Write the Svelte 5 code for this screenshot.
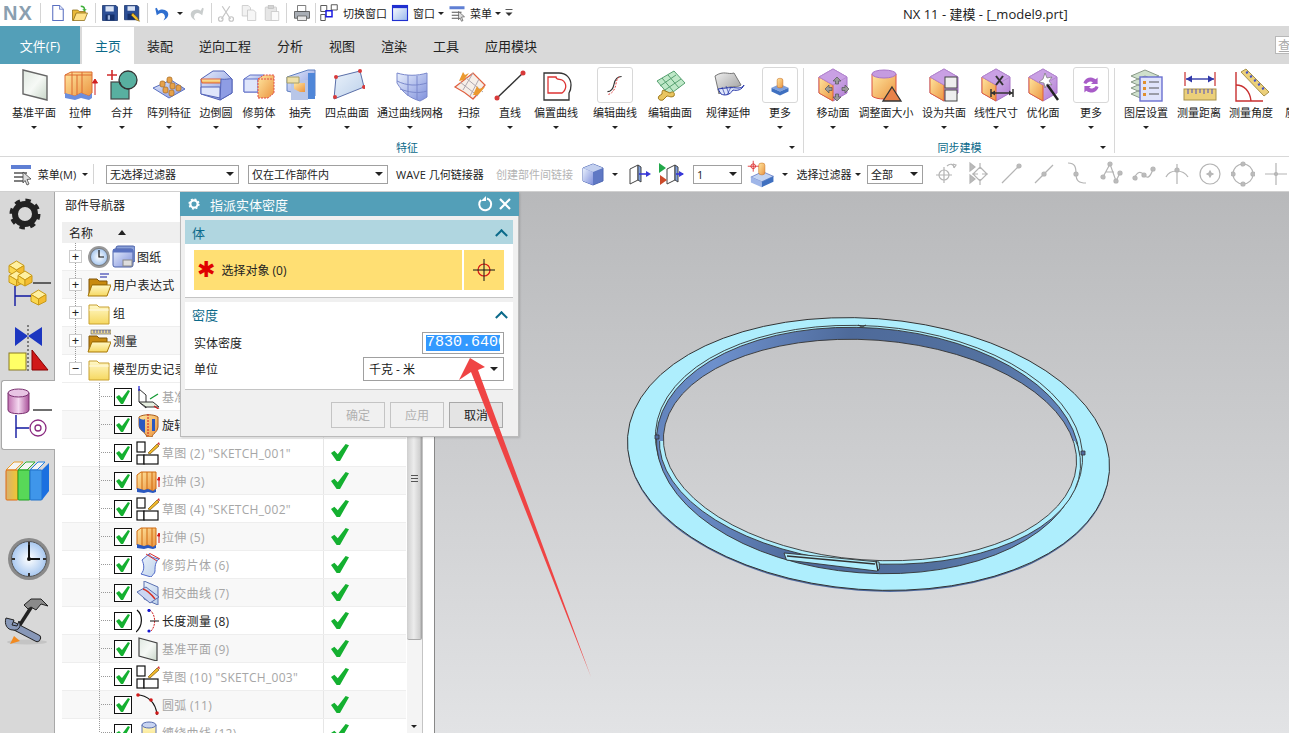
<script>
  // slot widths are px, read off the reference so the bars line up
  const qat = [
    { w: 34, logo: true }, { w: 12, sep: true },
    { w: 24, icon: "new" }, { w: 20, icon: "open" }, { w: 10, sep: true },
    { w: 20, icon: "save" }, { w: 24, icon: "saveas" }, { w: 6, sep: true },
    { w: 24, icon: "undo" }, { w: 12, caret: true }, { w: 22, icon: "redo" }, { w: 6, sep: true },
    { w: 24, icon: "cut" }, { w: 22, icon: "copy" }, { w: 23, icon: "paste" }, { w: 6, sep: true },
    { w: 26, icon: "print" }, { w: 1, sep: true },
    { w: 26, icon: "switchwin" }, { w: 46, label: "切换窗口" },
    { w: 24, icon: "win" }, { w: 24, label: "窗口" }, { w: 10, caret: true },
    { w: 22, icon: "menu" }, { w: 26, label: "菜单" }, { w: 8, caret: true },
    { w: 14, icon: "more" }
  ];

  const tabs = ["主页", "装配", "逆向工程", "分析", "视图", "渲染", "工具", "应用模块"];

  const groups = [
    {
      title: "特征", w: 804, pad: 10, arrow: true,
      items: [
        ["基准平面", 48, "datum"], ["拉伸", 44, "extrude"], ["合并", 40, "merge"], ["阵列特征", 54, "pattern"],
        ["边倒圆", 40, "blend"], ["修剪体", 46, "trim"], ["抽壳", 36, "shell"], ["四点曲面", 58, "fourpt"],
        ["通过曲线网格", 68, "mesh"], ["扫掠", 50, "sweep"], ["直线", 32, "line"], ["偏置曲线", 60, "offset"],
        ["编辑曲线", 58, "editcurve", true], ["编辑曲面", 52, "editsurf"], ["规律延伸", 64, "law"], ["更多", 40, "morefeat", true]
      ]
    },
    {
      title: "同步建模", w: 311, pad: 0, arrow: true,
      items: [
        ["移动面", 58, "moveface"], ["调整面大小", 48, "resize"], ["设为共面", 68, "coplanar"], ["线性尺寸", 36, "lindim"],
        ["优化面", 58, "optimize"], ["更多", 38, "moresync", true]
      ]
    },
    {
      title: "", w: 218, pad: 0,
      items: [
        ["图层设置", 62, "layers"], ["测量距离", 44, "measdist", false, true], ["测量角度", 60, "measang", false, true],
        ["质量属性", 52, "mass", false, true]
      ]
    }
  ];

  const selbar = [
    { w: 8 }, { w: 26, icon: "menu", size: 24 }, { w: 46, label: "菜单(M)" }, { w: 10, caret: true }, { w: 6, sep: true }, { w: 10 },
    { w: 133, select: "无选择过滤器" }, { w: 9 }, { w: 140, select: "仅在工作部件内" }, { w: 8 },
    { w: 100, label: "WAVE 几何链接器", left: true }, { w: 82, label: "创建部件间链接", left: true, off: true },
    { w: 30, icon: "cube", size: 24 }, { w: 14, caret: true }, { w: 34, icon: "wave1", size: 24 }, { w: 30, icon: "wave2", size: 26, vb: 26 }, { w: 7 },
    { w: 49, select: "1" }, { w: 38, icon: "filt", size: 28, vb: 36 }, { w: 10, caret: true }, { w: 6 },
    { w: 56, label: "选择过滤器" }, { w: 12, caret: true }, { w: 3 }, { w: 56, select: "全部" }, { w: 5 }
  ];

  const snaps = ["s1", "s2", "s3", "s4", "s5", "s6", "s7", "s8", "s9", "s10", "s11"];

  const sideTabs = [
    { icon: "sgear", h: 52 }, { icon: "sasm", h: 82 }, { icon: "scon", h: 44 },
    { icon: "spart", h: 70, mt: 10, active: true },
    { icon: "sbooks", h: 70 }, { icon: "sclock", h: 56, mt: 15 }, { icon: "stools", h: 56 }
  ];

  const topRows = [
    { text: "图纸", icons: ["clock", "sheets"], open: false },
    { text: "用户表达式", icons: ["folderexp"], open: false },
    { text: "组", icons: ["folder"], open: false },
    { text: "测量", icons: ["foldermeas"], open: false },
    { text: "模型历史记录", icons: ["folder"], open: true }
  ];

  const features = [
    ["基准坐标系 (0)", "tcsys", true], ["旋转 (1)", "trevolve", false], ['草图 (2) "SKETCH_001"', "tsketch", true],
    ["拉伸 (3)", "textrude", true], ['草图 (4) "SKETCH_002"', "tsketch", true], ["拉伸 (5)", "textrude", true],
    ["修剪片体 (6)", "ttrim", true], ["相交曲线 (7)", "tinter", true], ["长度测量 (8)", "tlength", false],
    ["基准平面 (9)", "tdatum", true], ['草图 (10) "SKETCH_003"', "tsketch", true], ["圆弧 (11)", "tarc", true],
    ["缠绕曲线 (12)", "twrap", true]
  ];

  const cube = `<path d="M18 2l14 8v16l-14 8L4 26V10z" fill="url(#gLilac)" stroke="#a874c8"/><path d="M4 10l14 8v16L4 26z" fill="url(#gOrange)" stroke="#e0603a"/><path d="M4 10l14-8 14 8-14 8z" fill="#c9a0e4" stroke="#b488d0"/>`;

  // little yellow block for the assembly tab
  const block = (x, y, w, h) =>
    `<g stroke="#c89a18"><path d="M${x} ${y + h * 0.3}L${x + w / 2} ${y}L${x + w} ${y + h * 0.3}L${x + w / 2} ${y + h * 0.6}Z" fill="#fff0a0"/>` +
    `<path d="M${x} ${y + h * 0.3}L${x + w / 2} ${y + h * 0.6}V${y + h}L${x} ${y + h * 0.75}Z" fill="#fbd850"/>` +
    `<path d="M${x + w} ${y + h * 0.3}L${x + w / 2} ${y + h * 0.6}V${y + h}L${x + w} ${y + h * 0.75}Z" fill="#f4bc30"/></g>`;

  const icons = {
    // quick access
    new: `<path d="M5 2h9l5 5v15H5z" fill="#fff" stroke="#5a6fc0" stroke-width="1.4"/><path d="M14 2v5h5" fill="#dfe6fa" stroke="#5a6fc0"/>`,
    open: `<path d="M2 8h7l2 2h8v3H7l-3 9H2z" fill="#e9b93a" stroke="#8a6a14"/><path d="M7 12h15l-4 10H3z" fill="#ffe28a" stroke="#8a6a14"/><path d="M13 2c4 0 6 2 6 5h2l-3 3-3-3h2c0-2-2-3-4-3z" fill="#3faf3a"/>`,
    save: `<path d="M2 2h18l2 2v18H2z" fill="#2c4f96" stroke="#15306a"/><rect x="6" y="3" width="11" height="7" fill="#d8e2f4"/><rect x="6" y="14" width="12" height="8" fill="#15306a"/><rect x="9" y="15" width="3" height="6" fill="#9fb4dc"/>`,
    saveas: `<path d="M2 2h17l2 2v17H2z" fill="#2c4f96" stroke="#15306a"/><rect x="6" y="3" width="10" height="6" fill="#d8e2f4"/><rect x="6" y="13" width="10" height="8" fill="#15306a"/><path d="M13 12l6 6 3 5-5-2-6-6z" fill="#f4c22a" stroke="#7a5a10" stroke-width=".8"/>`,
    undo: `<path d="M3 6l2 9 3-2c3-2 8-1 8 5l-2 4c6-3 8-8 5-12-3-3-8-4-12-1L5 5z" fill="#2f6fd0"/>`,
    redo: `<path d="M21 6l-2 9-3-2c-3-2-8-1-8 5l2 4C4 19 2 14 5 10c3-3 8-4 12-1l2-4z" fill="#c9cdcd"/>`,
    cut: `<path d="M6 20l11-17M18 20L7 3" stroke="#c4c4c4" stroke-width="1.6" fill="none"/><circle cx="5" cy="20" r="3" fill="none" stroke="#c4c4c4" stroke-width="1.6"/><circle cx="19" cy="20" r="3" fill="none" stroke="#c4c4c4" stroke-width="1.6"/>`,
    copy: `<path d="M3 2h8l3 3v11H3z" fill="#f2f2f2" stroke="#c4c4c4"/><path d="M10 8h8l3 3v11H10z" fill="#f6f6f6" stroke="#c4c4c4"/>`,
    paste: `<rect x="3" y="4" width="15" height="18" rx="1" fill="#e6e6e6" stroke="#c4c4c4"/><rect x="7" y="2" width="7" height="4" fill="#d4d4d4" stroke="#c0c0c0"/><path d="M11 10h10v12H11z" fill="#fafafa" stroke="#c4c4c4"/>`,
    print: `<path d="M6 2h11v8H6z" fill="#fff" stroke="#555"/><path d="M2 10h20v9H2z" fill="#a9aeb5" stroke="#444"/><path d="M6 16h12v6H6z" fill="#e8e8e8" stroke="#555"/>`,
    switchwin: `<path d="M1 2h8v8H1zM1 14h6v8H1zM15 1h8v7h-8z" fill="#fff" stroke="#555" stroke-width="1.3"/><rect x="8" y="9" width="8" height="8" fill="#fff" stroke="#1a1ae0" stroke-width="2"/>`,
    win: `<rect x="2" y="2" width="20" height="20" fill="url(#gWin)" stroke="#1f2fd0" stroke-width="1.5"/><rect x="2" y="2" width="20" height="3.5" fill="#1f2fd0"/>`,
    menu: `<rect x="2" y="3" width="20" height="4" fill="#5f7fd4"/><path d="M5 11h13M5 15h10M5 19h10" stroke="#555" stroke-width="1.6"/><path d="M14 10l8 7-4 .5 2 4.500-2 1-2-4.500-2 2.500z" fill="#ddd" stroke="#444" stroke-width=".8"/>`,
    more: `<path d="M6 6h12" stroke="#333" stroke-width="1.4"/><path d="M6 11h12l-6 6z" fill="#333"/>`,
    // feature group
    datum: `<path d="M7 3l24 6v24L7 27z" fill="url(#gSheet)" stroke="#666" stroke-width="1.4"/>`,
    extrude: `<path d="M3 8l6-3h21v21l-3 3-8-3-6 3-10-2z" fill="url(#gOrange)" stroke="#dc6a30"/><path d="M3 8h27M10 5v24M20 5v21M15 8v20" stroke="#dc6a30" fill="none"/><path d="M3 26l10 3 6-3 8 3 3-3v5l-3 2-8-2-6 2-10-2z" fill="#6b8ede"/><path d="M33 28V13m-2.500 3l2.500-4 2.500 4z" stroke="#d02020" fill="#d02020"/>`,
    merge: `<rect x="7" y="15" width="18" height="17" fill="#58b0a0" stroke="#444" stroke-width="1.2"/><circle cx="24" cy="13" r="9" fill="#58b0a0" stroke="#333" stroke-width="1.3"/><path d="M25 22a9 9 0 0 1-9-7" fill="none" stroke="#333"/><path d="M8 3v10M3 8h10" stroke="#d02a2a" stroke-width="1.6"/>`,
    pattern: `<path d="M2 21l18-8 14 9-16 9z" fill="url(#gBlue)" stroke="#5a70c0"/><g fill="#e6a24a" stroke="#a8681c" stroke-width=".7"><rect x="9" y="14" width="5" height="6" rx="2"/><rect x="16" y="10" width="5" height="6" rx="2"/><rect x="12" y="20" width="5" height="6" rx="2"/><rect x="19" y="16" width="5" height="6" rx="2"/><rect x="25" y="18" width="5" height="6" rx="2"/><rect x="18" y="23" width="5" height="6" rx="2"/></g>`,
    blend: `<path d="M3 12l12-8h11l8 8v14l-12 7-19-6z" fill="url(#gBlue)" stroke="#5464b8"/><path d="M3 12h20l3 4H4z" fill="url(#gYellow)" stroke="#e0603a"/><path d="M3 20h19v11L3 27z" fill="#dfe6fb" stroke="#5464b8"/><path d="M23 12c5 1 10-1 11 0v14l-12 7z" fill="#8e9de4" stroke="#5464b8"/>`,
    trim: `<path d="M3 12l6-4h14v17H3z" fill="url(#gBlue)" stroke="#6070c8"/><path d="M3 12h14v13H3z" fill="#dfe6fb" stroke="#6070c8"/><path d="M17 12l6-4h10v18l-6 5H17z" fill="url(#gOrange)" stroke="#e04848" stroke-dasharray="2 1"/><path d="M17 12h16" stroke="#e04848" stroke-dasharray="2 1"/>`,
    shell: `<path d="M5 10l21-7h7v26H26L5 24z" fill="url(#gBlue)" stroke="#5f7fc0"/><path d="M9 13h17v20H9z" fill="#b8c6e8"/><path d="M12 16h11v9H18l-6-3z" fill="url(#gOrange)"/><path d="M26 6h7v26h-7z" fill="#4f86d8"/><path d="M5 10h12v6H5z" fill="#eee0a8" stroke="#a8a068"/>`,
    fourpt: `<path d="M7 10l24-6 4 16-30 12z" fill="url(#gSheetB)" stroke="#5a6fa8"/><g fill="#d83a3a"><circle cx="7" cy="10" r="2"/><circle cx="31" cy="4" r="2"/><circle cx="35" cy="20" r="2"/><circle cx="6" cy="30" r="2"/></g>`,
    mesh: `<path d="M5 6c10 3 20 3 30 0v24c-3 2-5 3-7 4C18 31 11 26 5 16z" fill="url(#gBlue)" stroke="#7a88cc"/><path d="M16 8v21M25 9v24M5 14c10 5 20 5 30 2M8 22c8 3 18 5 27 2" fill="none" stroke="#7a88cc"/>`,
    sweep: `<path d="M4 20L22 6l12 12c-4 5-8 10-12 14C16 27 10 23 4 20z" fill="#f6efe9" stroke="#e06040" stroke-width="1.3"/><path d="M9 15l18 14M15 11l17 14M22 6L12 23M28 12L19 29" stroke="#b0a8b0" fill="none"/><path d="M8 14l4-9 2 3 4-2-5 7z" fill="#eb9a30"/><path d="M22 28l4-9 2 3 6-2-7 8z" fill="#eb9a30"/>`,
    line: `<path d="M5 31L31 6" stroke="#333" stroke-width="1.4"/><circle cx="5" cy="31" r="2.500" fill="#d83a3a"/><circle cx="31" cy="6" r="2.500" fill="#d83a3a"/>`,
    offset: `<path d="M6 6h15c7 0 12 5 12 12 0 5-2 8-2 8v7H6V6z" fill="#fff" stroke="#333" stroke-width="1.3"/><path d="M10 10h8c0 3 3 2 6 3 5 3 5 9 0 13H10z" fill="#fff" stroke="#d33" stroke-width="1.3"/>`,
    editcurve: `<path d="M10 25c4 0 6-3 7-8s3-8 8-8" fill="none" stroke="#333" stroke-width="1.2"/><path d="M11 28c4-1 7-5 8-11s2-7 5-8" fill="none" stroke="#d33" stroke-dasharray="2 1.500"/>`,
    editsurf: `<path d="M5 14L22 4l11 12-16 12z" fill="#bfe8c8" stroke="#56a070"/><path d="M10 11l11 13M16 8l11 13M8 19l16-11M13 23l16-11" stroke="#56a070" fill="none"/><path d="M11 23l7 3c4-3 5 1 4 3-3 2-5 0-7 0l-4 4c-3 1-6-1-4-4l3-2c0-2 0-3 1-4z" fill="#e9c560" stroke="#a07a1c"/>`,
    law: `<path d="M5 9c9-6 13-1 19-3l7 12c-5 4-14-2-22 9z" fill="url(#gGray)" stroke="#777"/><path d="M8 22c7-1 14-2 20-1 3 0 5-1 6-3-2 5-7 6-11 5-3 5-8 6-12 4z" fill="#dfe6fb" stroke="#2838a8"/><path d="M12 20l3 8M16 19l3 8M21 20l-4 8" stroke="#2838a8" fill="none" stroke-width=".7"/>`,
    morefeat: `<path d="M9 21l9-4 9 4-9 4z" fill="#7fa0dc"/><path d="M9 21l9 4v4l-9-4zM18 25l9-4v4l-9 4z" fill="#3f70c0"/><rect x="15" y="11" width="6" height="10" rx="2" fill="url(#gOrange)" stroke="#c87020" stroke-width=".6"/>`,
    filt: `<path d="M5 22l15-7 14 6-15 7z" fill="#c3d4f2" stroke="#5f78c4"/><path d="M5 22l14 6v7L5 29z" fill="#9fb6e8"/><path d="M19 28l15-7v7l-15 7z" fill="#3f70c0"/><rect x="15" y="4" width="8" height="15" rx="3" fill="url(#gOrange)" stroke="#c87020" stroke-width=".7"/><circle cx="8" cy="8" r="3" fill="none" stroke="#d81818"/><path d="M8 1v14M1 8h14" stroke="#d81818"/>`,
    // synchronous group
    moveface: `${cube}<g fill="#999" stroke="#555" stroke-width=".7"><path d="M22 10l4 4h-2.500v3H20.500v-3H18zM22 34l4-4h-2.500v-3H20.500v3H18z"/><path d="M10 22l4-4v2.500h3v3h-3V26zM34 22l-4-4v2.500h-3v3h3V26z"/></g>`,
    resize: `<path d="M4 7v22c4 4 20 4 24 0V7z" fill="url(#gOrange)" stroke="#dc5040"/><ellipse cx="16" cy="7" rx="12" ry="4" fill="#c59be0" stroke="#a874c8"/><path d="M24 20l9 14H15z" fill="#e8824a" stroke="#333" stroke-width="1.3"/>`,
    coplanar: `${cube}<rect x="19" y="10" width="12" height="11" fill="#eee" stroke="#444"/><rect x="19" y="23" width="12" height="11" fill="#eee" stroke="#444"/>`,
    lindim: `${cube}<path d="M18 9l7 9m0-9l-7 9" stroke="#333" stroke-width="2"/><path d="M13 26h22M13 22v8M35 22v8" stroke="#333" stroke-width="1.5"/><path d="M13 26l4-2.500v5zM35 26l-4-2.500v5z" fill="#333"/>`,
    optimize: `${cube}<path d="M21 16l12 17" stroke="#222" stroke-width="2.400"/><path d="M20 6l2 5 5-1-3 4 3 4-5-1-2 4-1-5-5-1 4-3z" fill="#fff" stroke="#777" stroke-width=".7"/>`,
    moresync: `<path d="M10 16a8 8 0 0 1 13-4l2-2v7h-7l2-2a5 5 0 0 0-7 2zM26 20a8 8 0 0 1-13 4l-2 2v-7h7l-2 2a5 5 0 0 0 7-2z" fill="#a85cc8"/>`,
    layers: `<g fill="#cfe0cc" stroke="#8a9a8a"><path d="M3 9l14-6 14 6-14 6zM3 15l14-6 14 6-14 6zM3 21l14-6 14 6-14 6zM3 27l14-6 14 6-14 6z"/></g><rect x="12" y="10" width="22" height="24" fill="#e0e4fb" stroke="#6a70d0" stroke-width="1.400"/><g fill="#e09030"><rect x="15" y="14" width="3" height="3"/><rect x="15" y="20" width="3" height="3"/><rect x="15" y="26" width="3" height="3"/></g><path d="M21 15h10M21 21h10M21 27h10" stroke="#555"/>`,
    measdist: `<path d="M4 5v14M34 5v14" stroke="#c83030" stroke-width="1.200"/><path d="M5 12h28" stroke="#3038a8" stroke-width="1.400"/><path d="M5 12l6-3.500v7zM33 12l-6-3.500v7z" fill="#3038a8"/><rect x="3" y="22" width="32" height="11" fill="#ecd07a" stroke="#a8924a"/><path d="M7 22v5M11 22v4M15 22v5M19 22v4M23 22v5M27 22v4M31 22v5" stroke="#5050c0"/>`,
    measang: `<path d="M3 5v29h27" fill="none" stroke="#c83030" stroke-width="1.400"/><path d="M3 18c8 0 14 6 15 16" fill="none" stroke="#c83030" stroke-width="1.400"/><path d="M9 3l5-3 23 23-5 4z" fill="#ecd07a" stroke="#a8924a" transform="translate(-1 2)"/><path d="M13 6l2-1M17 10l2-1M21 14l2-1M25 18l2-1M29 22l2-1" stroke="#4050c8" stroke-width="2"/>`,
    mass: `<path d="M4 30L15 6l16 18-12 10z" fill="#a8c498" stroke="#6e8a60"/><path d="M9 20l16 0M6 26l18 0" stroke="#6e8a60"/>`,
    // selection bar
    cube: `<path d="M12 2l10 4v13l-10 4-10-4V6z" fill="#5f78c4" stroke="#4f68b4"/><path d="M2 6l10 4v13L2 19z" fill="url(#gBlue)"/><path d="M2 6l10-4 10 4-10 4z" fill="#c3d0ef"/>`,
    wave1: `<path d="M3 7l8-4v15l-8 4z" fill="#fff" stroke="#444"/><path d="M11 3l3 2v15l-3-2z" fill="#7fa0dc" stroke="#444"/><path d="M12 12h10" stroke="#3838d8" stroke-width="1.600"/><path d="M24 12l-5-3v6z" fill="#3838d8"/>`,
    wave2: `<path d="M9 8l8-4v15l-8 4z" fill="#fff" stroke="#444"/><path d="M17 4l3 2v15l-3-2z" fill="#7fa0dc" stroke="#444"/><path d="M18 13h7" stroke="#3838d8" stroke-width="1.600"/><path d="M26 13l-5-3v6z" fill="#3838d8"/><path d="M1 2l7 5-7 5z" fill="#22a84a"/><path d="M2 14l7 5-7 5z" fill="#cc4a2a"/>`,
    // snap points, greyed out
    s1: `<circle cx="11" cy="14" r="5"/><path d="M11 6v16M3 14h16M14 5c3-3 7-2 7 2M21 7l2-3-3-1"/>`,
    s2: `<path d="M4 2v8l5-4zM4 14v8l5-4z" fill="#bbb"/><path d="M14 6l7 7-7 7-7-7zM14 2v6M14 18v6M6 13h6M16 13h6"/>`,
    s3: `<path d="M3 22L19 6"/><circle cx="20" cy="5" r="2" fill="#bbb"/>`,
    s4: `<path d="M3 22L21 4"/><circle cx="12" cy="13" r="2" fill="#bbb"/>`,
    s5: `<path d="M3 2c7 0 8 4 8 11s3 9 10 9"/><circle cx="11" cy="13" r="2" fill="#bbb"/>`,
    s6: `<path d="M4 16L11 3l6 17 4-8M7 11h8"/><g fill="#bbb"><circle cx="4" cy="16" r="2"/><circle cx="11" cy="3" r="2"/><circle cx="17" cy="20" r="2"/><circle cx="21" cy="12" r="2"/></g>`,
    s7: `<path d="M2 18c3-8 7-8 10-4s6 3 9-6"/><g fill="#bbb"><circle cx="3" cy="17" r="2"/><circle cx="12" cy="14" r="2"/><circle cx="21" cy="8" r="2"/></g>`,
    s8: `<path d="M1 16c4-8 17-8 22 0M12 3v20"/><circle cx="12" cy="9" r="2" fill="#bbb"/>`,
    s9: `<circle cx="12" cy="13" r="10"/><path d="M12 10l1 2 2 1-2 1-1 2-1-2-2-1 2-1z" fill="#bbb"/>`,
    s10: `<circle cx="12" cy="13" r="10"/><g fill="#bbb"><circle cx="12" cy="3" r="2"/><circle cx="12" cy="23" r="2"/><circle cx="2" cy="13" r="2"/><circle cx="22" cy="13" r="2"/></g>`,
    s11: `<path d="M12 2v22M1 13h22"/><circle cx="12" cy="13" r="1.500" fill="#bbb"/>`,
    // side tabs
    sgear: `<circle cx="22" cy="22" r="10" fill="none" stroke="#222" stroke-width="6"/><circle cx="22" cy="22" r="13.500" fill="none" stroke="#222" stroke-width="4" stroke-dasharray="5.300 5.300"/>`,
    sasm: `${block(6, 2, 15, 15)}${block(6, 12, 15, 15)}${block(15, 12, 14, 15)}${block(28, 31, 15, 15)}<path d="M30 24h19" stroke="#111" stroke-width="1.200"/><path d="M12 27v20M12 37h16" stroke="#1018a0" stroke-width="1.400"/>`,
    scon: `<path d="M12 5l13 9-13 10zM39 5L25 14l14 10z" fill="#1c36c0"/><path d="M25 3v47" stroke="#222" stroke-dasharray="2 2"/><rect x="6" y="31" width="17" height="17" fill="#ffff66" stroke="#8a7a20"/><path d="M29 28l16 20H29z" fill="#d01818" stroke="#800"/>`,
    spart: `<path d="M3 11v17c0 5 21 5 21 0V11z" fill="url(#gPink)" stroke="#7a3070"/><ellipse cx="13.500" cy="11" rx="10.500" ry="4" fill="#e8c4e4" stroke="#7a3070"/><path d="M28 28h19" stroke="#111" stroke-width="1.200"/><path d="M11 33v23M11 46h13" stroke="#1018a0" stroke-width="1.400"/><circle cx="33" cy="46" r="8" fill="none" stroke="#8a2a80" stroke-width="1.300"/><circle cx="33" cy="46" r="3" fill="none" stroke="#8a2a80" stroke-width="1.300"/>`,
    sbooks: `<path d="M3 11l8-8h9l-8 8z" fill="#f4f4f4" stroke="#e8a030"/><rect x="3" y="11" width="12" height="30" rx="1" fill="url(#gBookO)" stroke="#e06a10"/><path d="M15 11l8-8h9l-8 8z" fill="#f4f4f4" stroke="#30b030"/><rect x="15" y="11" width="12" height="30" rx="1" fill="#58d858" stroke="#20a020"/><path d="M27 11l8-8h7l-8 8v0z" fill="#f4f4f4" stroke="#2080e0"/><rect x="27" y="11" width="12" height="30" rx="1" fill="#3f96ea" stroke="#2070c8"/><path d="M39 11l7-7v28l-7 9z" fill="#1c70e0"/>`,
    sclock: `<g transform="translate(4 0)"><circle cx="22" cy="22" r="21" fill="#8a8a8a"/><circle cx="22" cy="22" r="17.500" fill="url(#gClock)" stroke="#555"/><path d="M22 8v14h11" fill="none" stroke="#111" stroke-width="2"/><circle cx="22" cy="22" r="2" fill="#111"/><g fill="#333"><rect x="21" y="5" width="2" height="3"/><rect x="21" y="36" width="2" height="3"/><rect x="5" y="21" width="3" height="2"/><rect x="36" y="21" width="3" height="2"/></g></g>`,
    stools: `<ellipse cx="24" cy="49" rx="20" ry="2.500" fill="#c4c4c4"/><path d="M13 38L29 13" stroke="#222" stroke-width="3.500"/><path d="M21 12l7-6h10l7 7-7-2-5 6-5-3-3 2z" fill="#8a8a8a" stroke="#222"/><path d="M9 32l25 13" stroke="#222" stroke-width="8" stroke-linecap="round"/><path d="M9 32l25 13" stroke="#8898b8" stroke-width="6" stroke-linecap="round"/><path d="M3 25l8 2-2 5 5 1 2-5c3 6-1 10-6 9-6 0-9-6-7-12z" fill="#8898b8" stroke="#222"/><path d="M7 51l4-8 6 5z" fill="#f28a20"/>`,
    // navigator tree
    clock: `<circle cx="12" cy="12" r="11" fill="#999"/><circle cx="12" cy="12" r="8.500" fill="url(#gClock)" stroke="#555" stroke-width=".6"/><path d="M12 5v7h5" fill="none" stroke="#111" stroke-width="1.200"/>`,
    sheets: `<rect x="5" y="1" width="19" height="16" rx="2" fill="#8aa0d8" stroke="#4a60a8"/><rect x="2" y="4" width="20" height="18" rx="2" fill="url(#gBlue)" stroke="#4a60a8"/><rect x="2" y="4" width="20" height="3.500" fill="#5a72c0"/><rect x="12" y="15" width="9" height="6" fill="#ddd" stroke="#888"/>`,
    folder: `<path d="M2 4h8l2 2h10v17H2z" fill="url(#gFold)" stroke="#c8a030"/><path d="M2 9h20" stroke="#fff" stroke-opacity=".7"/>`,
    folderexp: `<path d="M2 6h8l2 2h8v4H5l-3 10z" fill="#c88a10" stroke="#805408"/><path d="M5 12h19l-4 11H1z" fill="url(#gFold)" stroke="#a87808"/><path d="M13 1h9M13 4h7" stroke="#6066c0" stroke-width="1.300"/>`,
    foldermeas: `<path d="M2 7h8l2 2h8v4H5l-3 9z" fill="#c88a10" stroke="#805408"/><path d="M5 13h19l-4 10H1z" fill="url(#gFold)" stroke="#a87808"/><rect x="4" y="1" width="20" height="4" fill="#eedc9a" stroke="#555" stroke-width=".6"/><path d="M7 1v3M10 1v3M13 1v3M16 1v3M19 1v3M22 1v3" stroke="#3040b0" stroke-width=".8"/>`,
    tcsys: `<path d="M3 4v13l7 6V10z" fill="#fff" stroke="#333"/><path d="M3 17h14l6 5H10z" fill="#e6efe0" stroke="#333"/><path d="M3 6V1" stroke="#1818d0" stroke-width="1.200"/><path d="M14 14l8-5" stroke="#109830" stroke-width="1.200"/><path d="M18 21l6 4" stroke="#d01818" stroke-width="1.200"/>`,
    trevolve: `<path d="M3 4c4-3 15-3 19 0v10c-1 6-5 6-6 10h-5C9 18 3 18 3 12z" fill="url(#gOrange)" stroke="#a85a1c"/><path d="M3 5c3 2 5 2 6 1v14C6 18 3 16 3 12zM16 6h3v12h-3z" fill="#2a58c0"/><path d="M12 1v22" stroke="#d01818" stroke-dasharray="2 1"/>`,
    tsketch: `<g fill="#fff" stroke="#111" stroke-width="1.200"><rect x="1" y="1" width="8" height="10"/><rect x="1" y="14" width="7" height="9"/><rect x="8" y="14" width="14" height="9"/></g><path d="M12 12l9-9 2 2-9 8z" fill="#f2b82a" stroke="#7a5a10" stroke-width=".7"/><path d="M21 3l2-2 1 3z" fill="#d03030"/>`,
    textrude: `<path d="M1 6l4-3h15v17l-3 2-5-2-4 2-7-2z" fill="url(#gOrange)" stroke="#d06a10"/><path d="M6 3v19M11 3v18M16 3v18" stroke="#d06a10"/><path d="M1 19l7 2 4-1 5 2 3-2v3l-3 1-5-1-4 1-7-1z" fill="#2a58c0"/><path d="M23 18V9m-1.500 2l1.500-3 1.500 3z" stroke="#d01818" fill="#d01818"/>`,
    ttrim: `<path d="M5 21c4-4 3-10 1-14L13 1c1 3 5 4 10 5-4 3-4 8-4 12 0 3-3 4-4 6z" fill="url(#gSheetB)" stroke="#4f68c8"/><path d="M10 1l11 7M13 0l11 6" stroke="#d83030"/>`,
    tinter: `<path d="M8 0l14 6v18L8 18z" fill="url(#gSheetB)" stroke="#5a70b0"/><path d="M1 11l9-5 13 10-9 6z" fill="#cbd6f2" stroke="#5a70b0"/><path d="M7 8c4 1 8 5 12 10" stroke="#d83020" stroke-width="1.500" fill="none"/>`,
    tlength: `<path d="M1 1c6 5 6 16-1 22" fill="none" stroke="#111" stroke-width="1.200"/><path d="M14 1c6 5 6 16 1 21" fill="none" stroke="#d02020" stroke-dasharray="2 1"/><path d="M14 12h9" stroke="#111"/><circle cx="13" cy="1.500" r="1.600" fill="#1818d0"/><circle cx="13" cy="22" r="1.600" fill="#1818d0"/>`,
    tdatum: `<path d="M3 1l18 5v18L3 19z" fill="url(#gSheet)" stroke="#444" stroke-width="1.200"/>`,
    tarc: `<path d="M1 2c10 0 19 7 20 20" fill="none" stroke="#111" stroke-width="1.200"/><g fill="#d01818"><circle cx="2" cy="2" r="1.800"/><circle cx="15" cy="7" r="1.800"/><circle cx="21" cy="20" r="1.800"/></g>`,
    twrap: `<path d="M6 4v18c4 2 10 2 14 0V4z" fill="url(#gFold)" stroke="#5a70b0"/><ellipse cx="13" cy="4" rx="7" ry="3" fill="#c8d4f2" stroke="#5a70b0"/>`
  };

  function toPath(cx, cy, a, b, deg) {
    // rotated ellipse as two arcs
    const r = (deg * Math.PI) / 180;
    const dx = a * Math.cos(r), dy = a * Math.sin(r);
    return `M${cx - dx} ${cy - dy}A${a} ${b} ${deg} 1 1 ${cx + dx} ${cy + dy}A${a} ${b} ${deg} 1 1 ${cx - dx} ${cy - dy}Z`;
  }

  const outer = toPath(868.5, 454, 241.5, 135.5, 4.2);
  const step = toPath(869, 447, 214, 121, 4.2);
  const wall = toPath(868, 450.5, 212, 122.5, 4.2);
  const rim = toPath(870, 453, 211, 110.5, 4.2);
  const hole = toPath(870, 450, 207, 110, 4.2);
</script>

<svg class="defs" aria-hidden="true">
  <defs>
    <linearGradient id="gOrange" x1="0" y1="0" x2="1" y2="1"><stop offset="0" stop-color="#ffe6a0" /><stop offset="1" stop-color="#eb9440" /></linearGradient>
    <linearGradient id="gYellow" x1="0" y1="0" x2="0" y2="1"><stop offset="0" stop-color="#fff2b0" /><stop offset="1" stop-color="#f0b050" /></linearGradient>
    <linearGradient id="gBlue" x1="0" y1="0" x2="1" y2="1"><stop offset="0" stop-color="#e8effc" /><stop offset="1" stop-color="#7f90dc" /></linearGradient>
    <linearGradient id="gLilac" x1="0" y1="0" x2="1" y2="1"><stop offset="0" stop-color="#e8d8f4" /><stop offset="1" stop-color="#b078d4" /></linearGradient>
    <linearGradient id="gSheet" x1="0" y1="0" x2="1" y2="1"><stop offset="0" stop-color="#dfe8e0" /><stop offset=".5" stop-color="#f6f9f6" /><stop offset="1" stop-color="#c8d6c8" /></linearGradient>
    <linearGradient id="gSheetB" x1="0" y1="0" x2="1" y2="1"><stop offset="0" stop-color="#eaf2fb" /><stop offset="1" stop-color="#bcd0ea" /></linearGradient>
    <linearGradient id="gGray" x1="0" y1="0" x2="1" y2="1"><stop offset="0" stop-color="#eee" /><stop offset="1" stop-color="#999" /></linearGradient>
    <linearGradient id="gWin" x1="0" y1="0" x2="1" y2="1"><stop offset="0" stop-color="#fff" /><stop offset="1" stop-color="#98b8ec" /></linearGradient>
    <linearGradient id="gPink" x1="0" y1="0" x2="1" y2="0"><stop offset="0" stop-color="#c070b0" /><stop offset=".5" stop-color="#f4d8f0" /><stop offset="1" stop-color="#a85098" /></linearGradient>
    <linearGradient id="gBookO" x1="0" y1="0" x2="1" y2="0"><stop offset="0" stop-color="#d8b070" /><stop offset="1" stop-color="#f0c830" /></linearGradient>
    <linearGradient id="gFold" x1="0" y1="0" x2="0" y2="1"><stop offset="0" stop-color="#fff8c8" /><stop offset="1" stop-color="#f6d860" /></linearGradient>
    <radialGradient id="gClock"><stop offset="0" stop-color="#fff" /><stop offset="1" stop-color="#a8c8f0" /></radialGradient>
    <linearGradient id="gWall" gradientUnits="userSpaceOnUse" x1="650" y1="400" x2="1090" y2="500">
      <stop offset="0" stop-color="#5f80b8" /><stop offset=".12" stop-color="#6d90cc" /><stop offset=".4" stop-color="#4e6a9a" /><stop offset=".7" stop-color="#53719f" /><stop offset="1" stop-color="#6a8dc8" />
    </linearGradient>
    <mask id="holeMask" maskUnits="userSpaceOnUse" x="600" y="300" width="540" height="300">
      <rect x="600" y="300" width="540" height="300" fill="#fff" />
      <path d={hole} fill="#000" />
    </mask>
    <clipPath id="lowerHalf"><rect x="600" y="441" width="540" height="160" /></clipPath>
  </defs>
</svg>

{#snippet bar(slots)}
  {#each slots as s}
    <div class="slot" class:left={s.left} style="width:{s.w}px">
      {#if s.logo}
        <span class="logo">NX</span>
      {:else if s.sep}
        <span class="sep"></span>
      {:else if s.caret}
        <span class="caret"></span>
      {:else if s.icon}
        <svg width={s.size || 18} height={s.size || 18} viewBox="0 0 {s.vb || 24} {s.vb || 24}">{@html icons[s.icon]}</svg>
      {:else if s.select}
        <div class="select"><span>{s.select}</span><span class="caret big"></span></div>
      {:else if s.label}
        <span class:off={s.off}>{s.label}</span>
      {/if}
    </div>
  {/each}
{/snippet}

<div class="app">
  <header class="qat">
    {@render bar(qat)}
    <div class="title">NX 11 - 建模 - [_model9.prt]</div>
  </header>

  <nav class="tabs">
    <div class="file">文件(F)</div>
    {#each tabs as t, i}
      <div class="tab" class:active={i === 0}>{t}</div>
    {/each}
    <div class="search">查</div>
  </nav>

  <section class="ribbon">
    {#each groups as g}
      <div class="group" style="width:{g.w}px;padding-left:{g.pad}px">
        <div class="items">
          {#each g.items as [label, w, icon, boxed, noarrow]}
            <div class="item" style="width:{w}px">
              <div class="ico" class:boxed>
                <svg width={boxed ? 34 : 36} height={boxed ? 34 : 36} viewBox="0 0 36 36">{@html icons[icon]}</svg>
              </div>
              <div class="lab">{label}</div>
              {#if !noarrow}<span class="caret"></span>{/if}
            </div>
          {/each}
        </div>
        <div class="gtitle">
          {g.title}
          {#if g.arrow}<span class="caret gcaret"></span>{/if}
        </div>
      </div>
    {/each}
  </section>

  <section class="selbar">
    {@render bar(selbar)}
    {#each snaps as s}
      <div class="snap">
        <svg width="24" height="26" viewBox="0 0 24 26" fill="none" stroke="#b4b4b4" stroke-width="1.200">{@html icons[s]}</svg>
      </div>
    {/each}
  </section>

  <main class="main">
    <aside class="side">
      {#each sideTabs as t}
        <div class="stab" class:active={t.active} style="height:{t.h}px;margin-top:{t.mt || 0}px">
          <svg width="48" height={t.active ? 66 : 52} viewBox={t.active ? "0 0 48 66" : "0 0 48 52"}>{@html icons[t.icon]}</svg>
        </div>
      {/each}
    </aside>

    <div class="nav">
      <div class="navhead">部件导航器</div>
      <div class="table">
        <div class="thead"><span>名称</span><span class="sort"></span></div>
        {#each topRows as r, i}
          <div class="row top" class:alt={i % 2 === 1} class:last={r.open}>
            <span class="exp">{r.open ? "−" : "+"}</span>
            {#each r.icons as ic}
              <svg width="24" height="24" viewBox="0 0 24 24">{@html icons[ic]}</svg>
            {/each}
            <span class="name">{r.text}</span>
          </div>
        {/each}
        {#each features as [text, ic, dim], i}
          <div class="row child" class:alt={i % 2 === 1}>
            <div class="namecol">
              <span class="check">
                <svg width="16" height="16" viewBox="0 0 16 16"><path d="M1 8l3-2 3 3 6-8 2 1-7 13h-2z" fill="#14b030" /></svg>
              </span>
              <svg width="24" height="24" viewBox="0 0 24 24">{@html icons[ic]}</svg>
              <span class="name" class:dim>{text}</span>
            </div>
            <div class="dep">
              <svg width="18" height="18" viewBox="0 0 16 16"><path d="M0 8l3-2 3 3 7-9 3 1-8 14H5z" fill="#14b030" /></svg>
            </div>
          </div>
        {/each}
      </div>
      <div class="scroll">
        <div class="thumb"><span class="grip"></span></div>
        <span class="caret sdown"></span>
      </div>
    </div>

    <div class="view">
      <svg class="ring" width="854" height="541" viewBox="435 192 854 541">
        <g mask="url(#holeMask)">
          <path d={outer} fill="#4f6a9e" transform="translate(0 1.500)" />
          <path d={outer} fill="#aeeefd" stroke="#333" />
          <path d={step} fill="none" stroke="#333" stroke-width=".9" />
          <path d={wall} fill="url(#gWall)" stroke="#333" stroke-width=".9" />
          <path d={rim} fill="#aeeefd" stroke="#333" stroke-width=".9" clip-path="url(#lowerHalf)" />
        </g>
        <path d={hole} fill="none" stroke="#333" stroke-width=".9" />
        <path d="M784 553l95 9 .5 7-3 2-90-11z" fill="#aeeefd" stroke="#333" stroke-width=".9" />
        <path d="M787 556l88 8M876 561l2 10" stroke="#333" fill="none" stroke-width="1.400" />
        <path d="M655 435h4v4h-4zM1081 451h4v4h-4z" fill="#4f6a9e" stroke="#333" stroke-width=".8" />
        <path d="M858 325l4 2 4-2" fill="none" stroke="#333" />
      </svg>
    </div>

    <div class="dialog">
      <div class="dtitle">
        <svg width="16" height="16" viewBox="0 0 44 44">{@html icons.sgear.replaceAll("#222", "#fff")}</svg>
        <span class="dname">指派实体密度</span>
        <svg class="dbtn" width="16" height="16" viewBox="0 0 16 16" fill="none" stroke="#fff" stroke-width="2"><path d="M4 4a6 6 0 1 0 6-1.500" /><path d="M9 0v5h-5" stroke-width="0" fill="#fff" /></svg>
        <svg width="16" height="16" viewBox="0 0 16 16" fill="none" stroke="#fff" stroke-width="2.200"><path d="M3 3l10 10M13 3L3 13" /></svg>
      </div>
      <div class="sect">
        <div class="shead blue"><span>体</span><span class="chev"></span></div>
        <div class="sbody pick">
          <div class="pickbox">
            <span class="star">✱</span>
            <span>选择对象 (0)</span>
          </div>
          <div class="pickbtn">
            <svg width="22" height="22" viewBox="0 0 22 22" fill="none"><circle cx="11" cy="11" r="6" stroke="#d81818" stroke-width="1.200" /><path d="M11 0v22M0 11h22" stroke="#111" /></svg>
          </div>
        </div>
      </div>
      <div class="sect">
        <div class="shead"><span>密度</span><span class="chev"></span></div>
        <div class="sbody form">
          <div class="frow">
            <span>实体密度</span>
            <div class="input"><span class="sel">7830.6400</span></div>
          </div>
          <div class="frow">
            <span>单位</span>
            <div class="select unit"><span>千克 - 米</span><span class="caret big"></span></div>
          </div>
        </div>
      </div>
      <div class="foot">
        <div class="btn off">确定</div>
        <div class="btn off">应用</div>
        <div class="btn">取消</div>
      </div>
    </div>

    <svg class="arrow" width="620" height="500" viewBox="0 192 620 500">
      <path d="M470 358l15 9-7 3 113 307-120-305-12 8z" fill="#ef4444" />
    </svg>
  </main>
</div>

<style>
  :global(body) {
    margin: 0;
    background: #fff;
  }

  .defs {
    position: absolute;
    width: 0;
    height: 0;
  }

  .app {
    width: 1289px;
    height: 733px;
    overflow: hidden;
    display: flex;
    flex-direction: column;
    font-family: "Open Sans", "Noto Sans CJK SC", sans-serif;
    font-size: 11px;
    color: #222;
    background: #fff;
  }

  .qat {
    height: 26px;
    display: flex;
    align-items: center;
    flex: none;
  }

  .slot {
    display: flex;
    align-items: center;
    justify-content: center;
    flex: none;
    white-space: nowrap;
  }

  .slot.left {
    justify-content: flex-start;
  }

  .logo {
    font: bold 20px "Liberation Sans", sans-serif;
    color: #8a9fb0;
    letter-spacing: 1px;
    margin-left: 2px;
  }

  .sep {
    width: 1px;
    height: 20px;
    background: #d4d4d4;
  }

  .caret {
    display: inline-block;
    width: 0;
    height: 0;
    border-left: 3px solid transparent;
    border-right: 3px solid transparent;
    border-top: 3px solid #222;
  }

  .caret.big {
    border-left-width: 4px;
    border-right-width: 4px;
    border-top-width: 4px;
  }

  .title {
    padding-left: 387px;
    font-size: 13px;
    white-space: nowrap;
  }

  .tabs {
    height: 38px;
    flex: none;
    background: #d9d9d9;
    display: flex;
    align-items: stretch;
    font-size: 13px;
    position: relative;
  }

  .file {
    width: 80px;
    margin-right: 2px;
    background: #539fb8;
    color: #fff;
    display: flex;
    align-items: center;
    justify-content: center;
  }

  .tab {
    padding: 0 13px;
    display: flex;
    align-items: center;
  }

  .tab.active {
    margin-top: 1px;
    background: #fff;
    color: #0b6a8a;
  }

  .search {
    position: absolute;
    left: 1275px;
    top: 10px;
    width: 14px;
    height: 18px;
    box-sizing: border-box;
    border: 1px solid #b8b8b8;
    border-right: 0;
    background: #fff;
    color: #aaa;
    line-height: 16px;
    padding-left: 2px;
    overflow: hidden;
  }

  .ribbon {
    height: 93px;
    flex: none;
    display: flex;
    border-bottom: 1px solid #d8d8d8;
    box-sizing: border-box;
    overflow: hidden;
  }

  .group {
    flex: none;
    box-sizing: border-box;
    position: relative;
    display: flex;
    flex-direction: column;
  }

  .group::after {
    content: "";
    position: absolute;
    right: 0;
    top: 4px;
    bottom: 3px;
    width: 1px;
    background: #d8d8d8;
  }

  .group:last-child::after {
    display: none;
  }

  .items {
    display: flex;
    flex: 1;
  }

  .item {
    flex: none;
    display: flex;
    flex-direction: column;
    align-items: center;
    white-space: nowrap;
  }

  .ico {
    width: 36px;
    height: 36px;
    margin-top: 3px;
    display: flex;
    align-items: center;
    justify-content: center;
    box-sizing: border-box;
    flex: none;
  }

  .ico.boxed {
    border: 1px solid #d8d8d8;
    border-radius: 3px;
  }

  .lab {
    margin-top: 2px;
    line-height: 16px;
  }

  .item .caret {
    margin-top: 5px;
  }

  .gtitle {
    text-align: center;
    color: #0b6a8a;
    line-height: 16px;
    height: 16px;
    position: relative;
  }

  .gcaret {
    position: absolute;
    right: 9px;
    top: 6px;
  }

  .selbar {
    height: 34px;
    flex: none;
    display: flex;
    align-items: center;
  }

  .select {
    flex: 1;
    height: 19px;
    box-sizing: border-box;
    border: 1px solid #a0a0a0;
    background: #fff;
    display: flex;
    align-items: center;
    justify-content: space-between;
    padding: 0 4px 0 3px;
  }

  .off {
    color: #b4b4b4;
  }

  .snap {
    width: 33.2px;
    flex: none;
    display: flex;
    justify-content: center;
  }

  .main {
    flex: 1;
    display: flex;
    position: relative;
    min-height: 0;
    border-top: 1px solid #d0d0d0;
  }

  .side {
    width: 55px;
    flex: none;
    box-sizing: border-box;
    background: #d8d8d8;
    border-right: 1px solid #a8a8a8;
    display: flex;
    flex-direction: column;
  }

  .stab {
    display: flex;
    align-items: center;
    justify-content: center;
    flex: none;
  }

  .stab.active {
    margin-left: 1px;
    margin-right: -1px;
    background: #fff;
    border: 1px solid #a8a8a8;
    border-right: 0;
    border-radius: 3px 0 0 3px;
    box-sizing: border-box;
  }

  .nav {
    width: 380px;
    flex: none;
    box-sizing: border-box;
    border-right: 1px solid #888;
    background: #fff;
    position: relative;
  }

  .navhead {
    height: 30px;
    line-height: 28px;
    padding-left: 10px;
    font-size: 12px;
  }

  .table {
    margin-left: 7px;
    width: 344px;
  }

  .thead {
    height: 21px;
    background: #efefef;
    display: flex;
    align-items: center;
    padding-left: 7px;
    gap: 25px;
    font-size: 12px;
  }

  .sort {
    width: 0;
    height: 0;
    border-left: 4px solid transparent;
    border-right: 4px solid transparent;
    border-bottom: 5px solid #222;
  }

  .row {
    height: 28px;
    box-sizing: border-box;
    border-bottom: 1px solid #eee;
    display: flex;
    align-items: center;
    position: relative;
    white-space: nowrap;
  }

  .row.alt {
    background: #f8f8f8;
  }

  .row.top {
    padding-left: 7px;
  }

  .row.top::before {
    content: "";
    position: absolute;
    left: 13px;
    top: 0;
    bottom: 0;
    border-left: 1px dotted #999;
  }

  .row.top.last::before {
    bottom: 14px;
  }

  .exp {
    width: 11px;
    height: 11px;
    border: 1px solid #ccc;
    background: #fff;
    line-height: 10px;
    text-align: center;
    font-size: 13px;
    margin-right: 5px;
    z-index: 1;
  }

  .name {
    margin-left: 2px;
    font-size: 12px;
    letter-spacing: 0.3px;
  }

  .name.dim {
    color: #a6a6a6;
  }

  .child .namecol {
    width: 261px;
    flex: none;
    display: flex;
    align-items: center;
    padding-left: 52px;
    box-sizing: border-box;
  }

  .child::before {
    content: "";
    position: absolute;
    left: 37px;
    top: 0;
    bottom: 0;
    border-left: 1px dotted #999;
  }

  .child::after {
    content: "";
    position: absolute;
    left: 39px;
    width: 11px;
    top: 13px;
    border-top: 1px dotted #999;
  }

  .check {
    width: 18px;
    height: 18px;
    box-sizing: border-box;
    border: 1px solid #111;
    background: #fff;
    margin-right: 4px;
    display: flex;
    align-items: center;
    justify-content: center;
  }

  .dep {
    flex: 1;
    align-self: stretch;
    border-left: 1px solid #e6e6e6;
    padding-left: 7px;
    display: flex;
    align-items: center;
  }

  .scroll {
    position: absolute;
    left: 352px;
    top: 0;
    bottom: 0;
    width: 15px;
    background: #f4f4f4;
    border-right: 1px solid #c4c4c4;
  }

  .thumb {
    position: absolute;
    left: 0;
    top: 180px;
    width: 15px;
    height: 268px;
    background: linear-gradient(90deg, #cfcfcf, #ececec 45%, #d0d0d0 85%, #999);
    border-bottom: 1px solid #aaa;
    box-sizing: border-box;
    border-radius: 2px;
  }

  .grip {
    position: absolute;
    left: 4px;
    top: 103px;
    width: 7px;
    height: 8px;
    background: repeating-linear-gradient(#555 0 1px, transparent 1px 3px);
  }

  .sdown {
    position: absolute;
    left: 4px;
    bottom: 5px;
  }

  .view {
    flex: 1;
    background: linear-gradient(#b8b9bb, #e2e3e5);
    position: relative;
    overflow: hidden;
  }

  .ring {
    display: block;
    position: absolute;
    left: 0;
    top: 0;
  }

  .dialog {
    position: absolute;
    left: 180px;
    top: 0;
    width: 339px;
    height: 245px;
    box-sizing: border-box;
    background: #f0f0f0;
    border: 1px solid #bbb;
    border-top: 0;
    box-shadow: 1px 1px 2px rgba(0, 0, 0, 0.15);
    display: flex;
    flex-direction: column;
    font-size: 12px;
  }

  .dtitle {
    height: 24px;
    flex: none;
    background: #539fb8;
    color: #fff;
    font-size: 13px;
    display: flex;
    align-items: center;
    padding: 0 6px;
    gap: 4px;
    margin: 0 -1px;
  }

  .dname {
    flex: 1;
    margin-left: 4px;
  }

  .sect {
    margin: 4px 5px 0 4px;
    background: #fff;
    border-bottom: 1px solid #c4c4c4;
  }

  .shead {
    height: 24px;
    padding: 0 7px;
    display: flex;
    align-items: center;
    justify-content: space-between;
    color: #0b6a8a;
    font-size: 13px;
  }

  .shead.blue {
    background: #b0d6e0;
  }

  .chev {
    width: 7px;
    height: 7px;
    border-left: 2px solid #0b6a8a;
    border-top: 2px solid #0b6a8a;
    transform: rotate(45deg) translate(2px, 2px);
  }

  .pick {
    display: flex;
    gap: 2px;
    padding: 6px 9px 7px;
  }

  .pickbox {
    flex: 1;
    height: 40px;
    background: #ffdf73;
    display: flex;
    align-items: center;
    padding-left: 3px;
    gap: 6px;
  }

  .star {
    color: #e00000;
    font-size: 22px;
    line-height: 1;
    font-family: "DejaVu Sans", sans-serif;
  }

  .pickbtn {
    width: 40px;
    height: 40px;
    background: #ffdf73;
    display: flex;
    align-items: center;
    justify-content: center;
  }

  .form {
    padding: 6px 9px 8px;
  }

  .frow {
    display: flex;
    align-items: center;
    justify-content: space-between;
  }

  .frow + .frow {
    margin-top: 3px;
  }

  .input {
    width: 82px;
    height: 22px;
    box-sizing: border-box;
    border: 1px solid #a0a0a0;
    padding: 2px 3px;
    overflow: hidden;
    background: #fff;
  }

  .sel {
    display: block;
    background: #3399ff;
    color: #fff;
    font: 15px/16px "Liberation Mono", monospace;
    white-space: nowrap;
    overflow: hidden;
  }

  .select.unit {
    flex: none;
    width: 141px;
    height: 24px;
    padding: 0 5px;
    font-size: 12px;
  }

  .foot {
    display: flex;
    justify-content: flex-end;
    gap: 5px;
    padding: 12px 15px 0 0;
  }

  .btn {
    width: 54px;
    height: 26px;
    box-sizing: border-box;
    border: 1px solid #a8a8a8;
    background: #e4e4e4;
    display: flex;
    align-items: center;
    justify-content: center;
    font-size: 12px;
  }

  .btn.off {
    background: #f0f0f0;
    color: #b0b0b0;
    border-color: #c4c4c4;
  }

  .arrow {
    position: absolute;
    left: 0;
    top: 0;
    pointer-events: none;
  }
</style>
